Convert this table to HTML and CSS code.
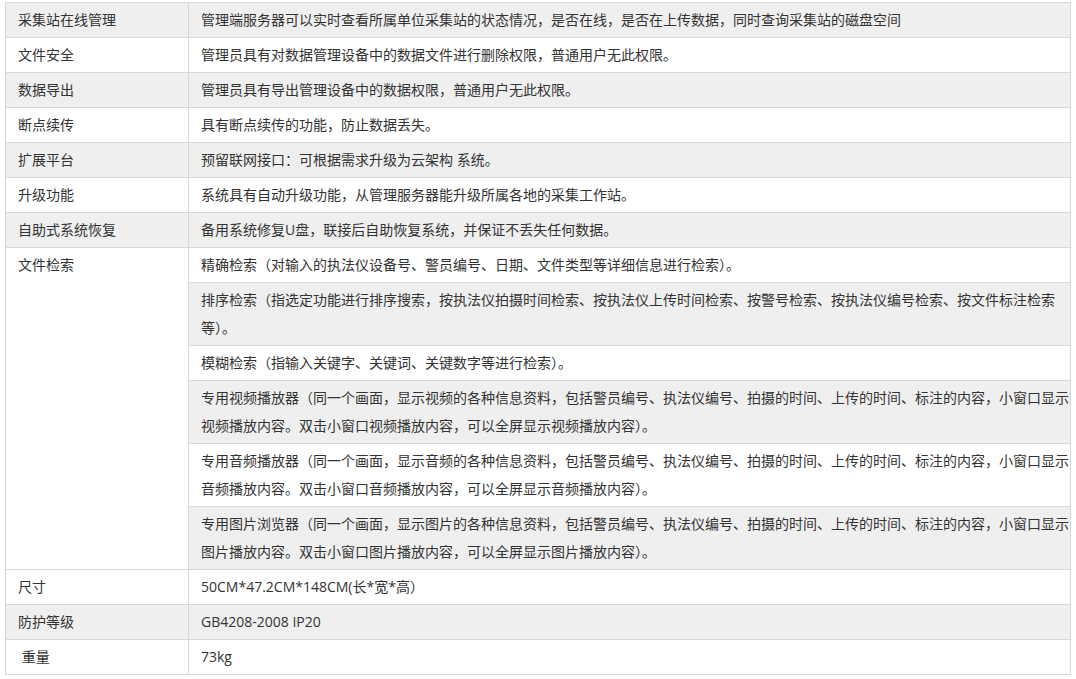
FILE: index.html
```html
<!DOCTYPE html>
<html lang="zh-CN">
<head>
<meta charset="utf-8">
<title>参数</title>
<link rel="stylesheet" href="styles.css">
</head>
<body>
<div class="wrap">
<table class="spec">
  <colgroup><col class="c-name"><col class="c-desc"></colgroup>
  <tbody>
    <tr><td>采集站在线管理</td><td>管理端服务器可以实时查看所属单位采集站的状态情况，是否在线，是否在上传数据，同时查询采集站的磁盘空间</td></tr>
    <tr><td>文件安全</td><td>管理员具有对数据管理设备中的数据文件进行删除权限，普通用户无此权限。</td></tr>
    <tr><td>数据导出</td><td>管理员具有导出管理设备中的数据权限，普通用户无此权限。</td></tr>
    <tr><td>断点续传</td><td>具有断点续传的功能，防止数据丢失。</td></tr>
    <tr><td>扩展平台</td><td>预留联网接口：可根据需求升级为云架构 系统。</td></tr>
    <tr><td>升级功能</td><td>系统具有自动升级功能，从管理服务器能升级所属各地的采集工作站。</td></tr>
    <tr><td>自助式系统恢复</td><td>备用系统修复U盘，联接后自助恢复系统，并保证不丢失任何数据。</td></tr>
    <tr><td rowspan="6" class="top">文件检索</td><td>精确检索（对输入的执法仪设备号、警员编号、日期、文件类型等详细信息进行检索）。</td></tr>
    <tr><td>排序检索（指选定功能进行排序搜索，按执法仪拍摄时间检索、按执法仪上传时间检索、按警号检索、按执法仪编号检索、按文件标注检索等）。</td></tr>
    <tr><td>模糊检索（指输入关键字、关键词、关键数字等进行检索）。</td></tr>
    <tr><td>专用视频播放器（同一个画面，显示视频的各种信息资料，包括警员编号、执法仪编号、拍摄的时间、上传的时间、标注的内容，小窗口显示视频播放内容。双击小窗口视频播放内容，可以全屏显示视频播放内容）。</td></tr>
    <tr><td>专用音频播放器（同一个画面，显示音频的各种信息资料，包括警员编号、执法仪编号、拍摄的时间、上传的时间、标注的内容，小窗口显示音频播放内容。双击小窗口音频播放内容，可以全屏显示音频播放内容）。</td></tr>
    <tr><td>专用图片浏览器（同一个画面，显示图片的各种信息资料，包括警员编号、执法仪编号、拍摄的时间、上传的时间、标注的内容，小窗口显示图片播放内容。双击小窗口图片播放内容，可以全屏显示图片播放内容）。</td></tr>
    <tr><td>尺寸</td><td>50CM*47.2CM*148CM(长*宽*高）</td></tr>
    <tr><td>防护等级</td><td>GB4208-2008 IP20</td></tr>
    <tr><td>&nbsp;重量</td><td>73kg</td></tr>
  </tbody>
</table>
</div>
</body>
</html>
```
FILE: styles.css
```css
html, body {
  margin: 0;
  padding: 0;
  background: #ffffff;
}
.wrap {
  padding: 2px 0 0 5px;
}
.spec {
  border-collapse: collapse;
  table-layout: fixed;
  width: 1065px;
  font-family: "Open Sans", "Noto Sans CJK SC", "Microsoft YaHei", sans-serif;
  font-size: 14px;
  line-height: 28px;
  color: #333333;
}
.c-name { width: 183px; }
.c-desc { width: 882px; }
.spec td {
  border: 1px solid #d8d8d8;
  padding: 3px 0 3px 12px;
  vertical-align: top;
  word-break: normal;
}
.spec tr:nth-child(odd) td {
  background: #efefef;
}
.spec tr:nth-child(even) td {
  background: #ffffff;
}
.spec td.top {
  background: #ffffff;
}
```
